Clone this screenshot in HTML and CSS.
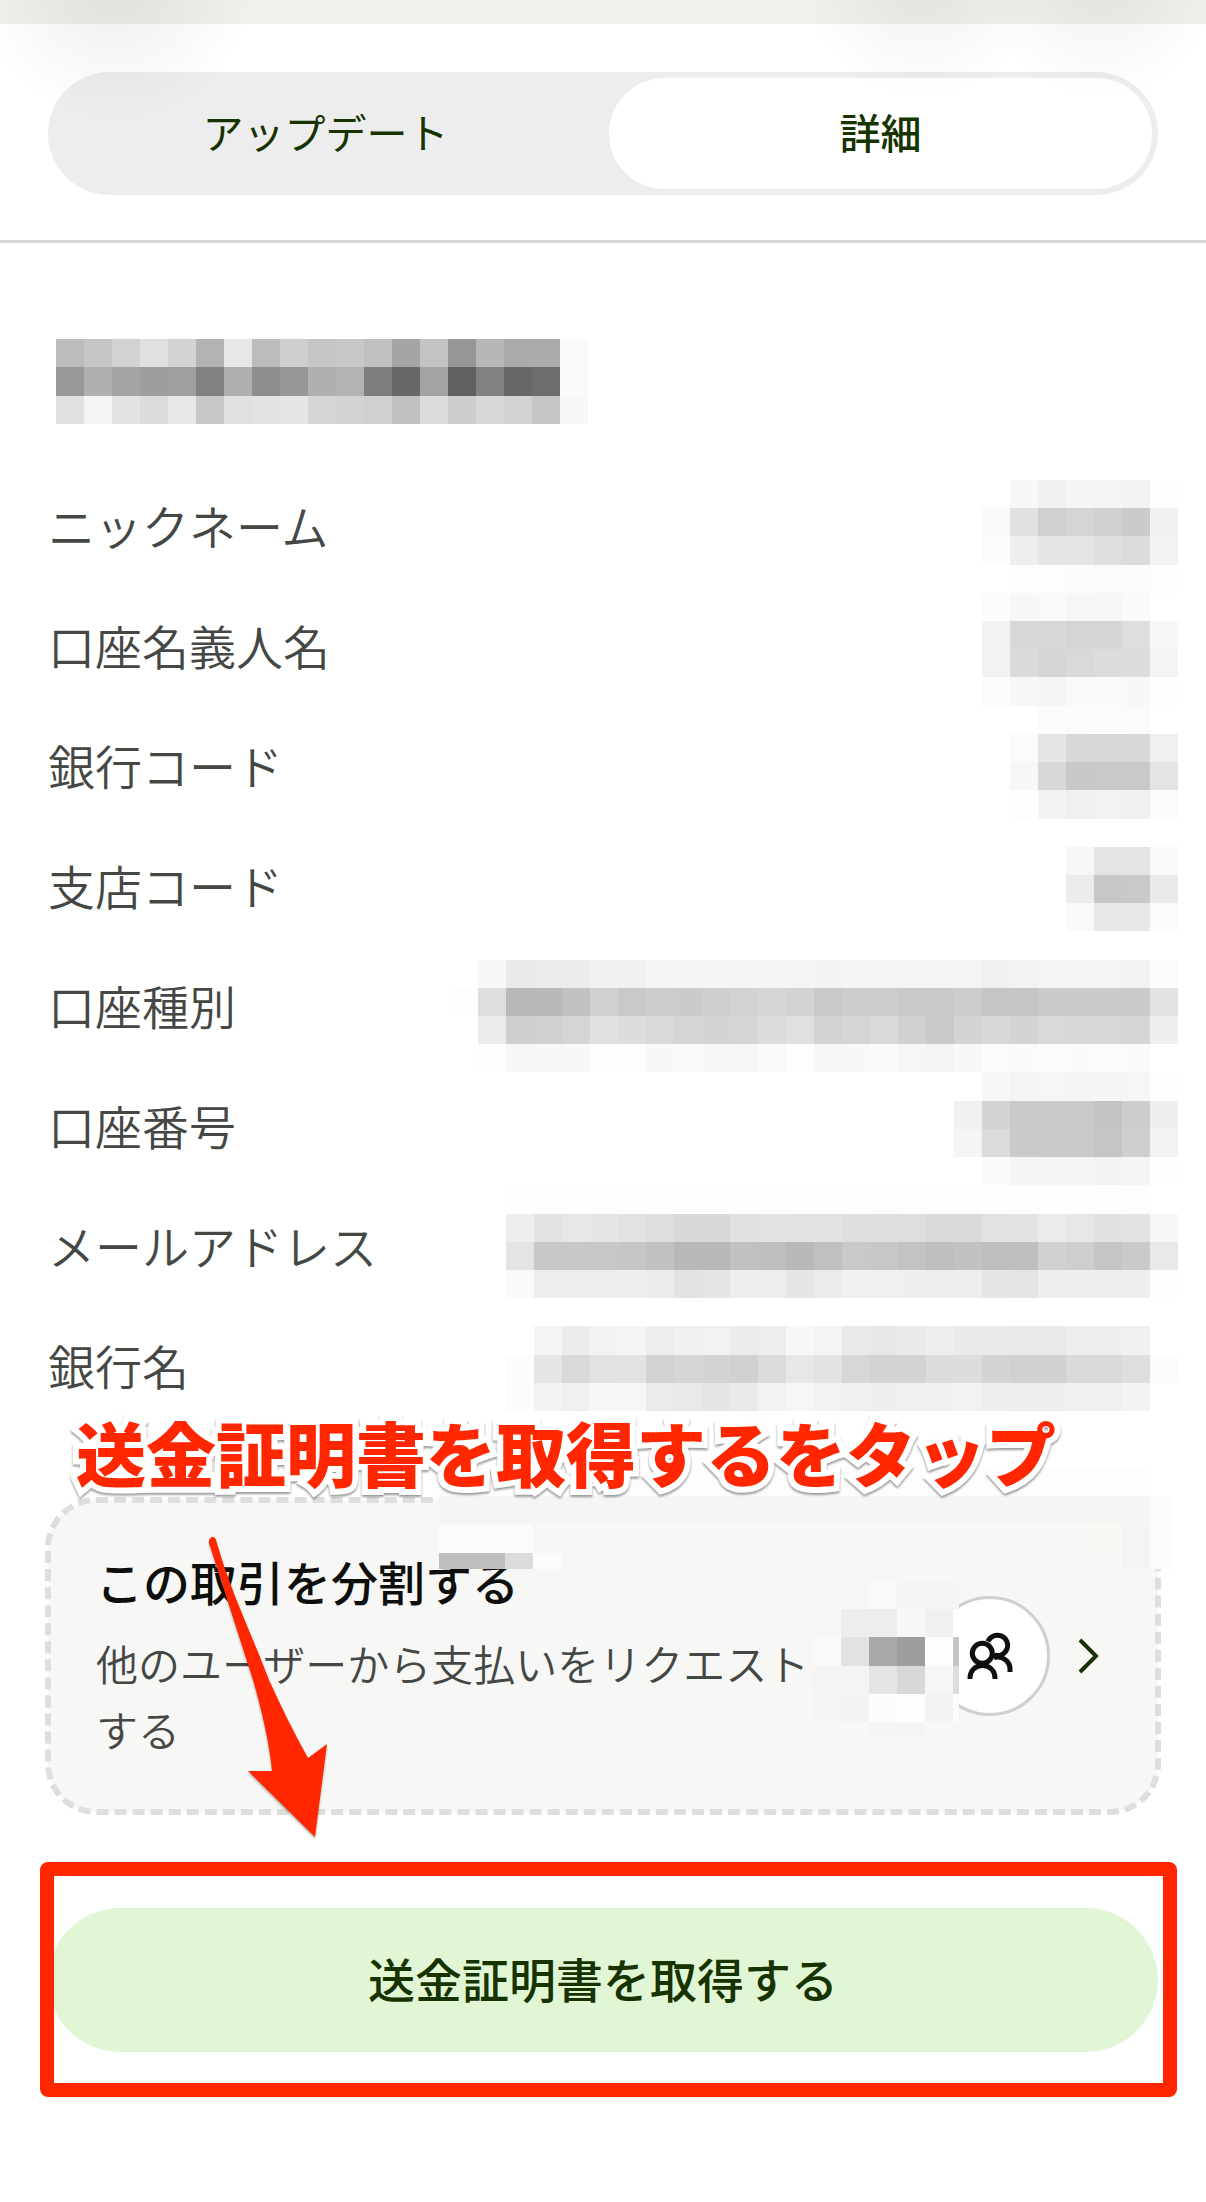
FILE: index.html
```html
<!DOCTYPE html>
<html lang="ja">

<head>
    <meta charset="UTF-8">
    <meta name="viewport" content="width=device-width, initial-scale=1.0">
    <title>詳細</title>
    <link rel="stylesheet" href="styles.css">
</head>

<body>
    <header class="top-bar"></header>

    <nav class="tabs-wrap">
        <div class="tabs" role="tablist">
            <button class="tab" type="button" role="tab" aria-selected="false">アップデート</button>
            <button class="tab active" type="button" role="tab" aria-selected="true">詳細</button>
        </div>
    </nav>

    <main class="content">
        <svg class="mosaic name-mosaic" id="name-mosaic" viewBox="0 0 19 3" preserveAspectRatio="none" aria-hidden="true"></svg>

        <section class="details">
            <table class="details-table">
                <tbody>
                    <tr><th scope="row">ニックネーム</th><td></td></tr>
                    <tr><th scope="row">口座名義人名</th><td></td></tr>
                    <tr><th scope="row">銀行コード</th><td></td></tr>
                    <tr><th scope="row">支店コード</th><td></td></tr>
                    <tr><th scope="row">口座種別</th><td></td></tr>
                    <tr><th scope="row">口座番号</th><td></td></tr>
                    <tr><th scope="row">メールアドレス</th><td></td></tr>
                    <tr><th scope="row">銀行名</th><td></td></tr>
                </tbody>
            </table>
            <svg class="mosaic details-mosaic" id="details-mosaic" viewBox="0 0 26 33" preserveAspectRatio="none" aria-hidden="true"></svg>
        </section>

        <section class="split">
            <a class="split-card" href="#">
                <span class="split-text">
                    <span class="split-title">この取引を分割する</span>
                    <span class="split-desc">他のユーザーから支払いをリクエストする</span>
                </span>
                <span class="avatars">
                    <span class="avatar">
                        <svg width="48" height="48" viewBox="0 0 48 48" fill="none" stroke="#0e0f0c" stroke-width="5">
                            <circle cx="16.3" cy="21.3" r="10" />
                            <path d="M4 47v-1c0-7 5-12.5 12.5-12.5S29 39 29 46v1" />
                            <path d="M22 9.5A10.2 10.2 0 1 1 28 23" />
                            <path d="M28 25.5c9-2 16 4 16 11.5v3" />
                        </svg>
                    </span>
                    <svg class="mosaic avatar-mosaic" id="avatar-mosaic" viewBox="0 0 5.2 5.5" preserveAspectRatio="none" aria-hidden="true"></svg>
                </span>
                <svg class="chevron" width="48" height="48" viewBox="0 0 48 48" fill="none" stroke="#163300" stroke-width="4">
                    <path d="M18 8l16 16-16 16" />
                </svg>
            </a>
            <svg class="mosaic card-mosaic" width="732" height="101" viewBox="0 0 732 101" aria-hidden="true">
                <rect width="711" height="28" fill="#fdfdfd" />
                <rect y="28" width="711" height="73" fill="#f7f7f5" />
                <rect y="28" width="711" height="28" fill="#f5f5f4" />
                <rect x="711" y="28" width="21" height="73" fill="#fbfbfa" />
                <rect y="57" width="94" height="28" fill="#fcfcfb" />
                <rect x="656" y="57" width="27" height="28" fill="#f8f8f4" />
                <rect x="683" y="57" width="28" height="44" fill="#f4f4f3" />
                <rect y="85" width="66" height="16" fill="#bfbfbf" />
                <rect x="66" y="85" width="28" height="16" fill="#dcdcdc" />
                <rect x="94" y="85" width="28" height="16" fill="#fcfcfb" />
            </svg>
            <p class="note">送金証明書を取得するをタップ</p>
            <svg class="arrow" width="140" height="320" viewBox="200 1530 140 320" aria-hidden="true">
                <path fill="#ff2600" d="M216 1540C230 1590 250 1630 269 1680Q288 1722 308 1758L327 1744 315 1837 248 1771H272C269 1740 262 1712 253 1680L209 1543C208 1536 215 1535 216 1540Z" />
            </svg>
        </section>

        <div class="action">
            <button class="receipt-btn" type="button">送金証明書を取得する</button>
            <span class="highlight"></span>
        </div>
    </main>

    <script>
        // Each entry: [row, first column, grey level of every cell]
        const nameCells = [
            [0, 0, 'bc c6 d2 e0 d3 b3 e7 bc cf c6 c8 c0 a5 c3 97 b7 ab ab fa'],
            [1, 0, '98 b0 a4 9e 9f 82 af 8e 96 b0 b3 7e 68 a3 60 82 68 6d fa'],
            [2, 0, 'e0 f4 e3 dc e8 c8 e0 e3 e6 d5 d2 d0 c1 dc cd d7 d3 c6 f8']
        ];

        const detailCells = [
            [0, 20, 'f8 f1 f5 f4 f2 fd'],
            [1, 19, 'fa e1 d0 d5 d1 cb f1'],
            [2, 19, 'fc ee e6 e4 df dc f3'],
            [3, 20, 'fd fd fc fb fb fd'],
            [4, 19, 'fc f7 f9 f6 f7 fa'],
            [5, 19, 'f2 d8 d8 d5 d6 de f8'],
            [6, 19, 'f2 da d6 d9 dc dc f4'],
            [7, 19, 'fc f7 f5 f9 fa f8 fe'],
            [8, 21, 'fc fb fb fb'],
            [9, 20, 'fb e5 d8 d7 d8 f0'],
            [10, 20, 'f7 d8 c8 c9 c9 e4'],
            [11, 20, 'fd f3 f0 f2 f1 fb'],
            [13, 22, 'f6 e4 e4 f9'],
            [14, 22, 'ec c7 c9 ea'],
            [15, 22, 'f9 e8 e8 fb'],
            [17, 1, 'f8 ea eb ec f0 f1 f4 f5 f5 f5 f5 f4 f3 f5 f4 f5 f5 f4 f0 f2 f4 f4 f4 f3 fc'],
            [18, 0, 'fd de b8 b9 c1 d0 c9 cd cb cf d2 d6 d3 c9 cc cc c9 c9 cd c5 c5 cb cb cb cb e3'],
            [19, 1, 'eb cf d0 d5 e1 dd d9 d5 d4 d5 dc e0 d2 d5 d9 d0 c9 d4 d7 d4 d9 d7 d7 d5 ef'],
            [20, 1, 'fd f8 f8 f8 fd fd f8 f9 f7 f7 fa fd f7 f8 fa f6 f4 f8 fb fa fc fa fc fa'],
            [21, 19, 'f8 f5 f6 f5 f5 f6 fe'],
            [22, 18, 'f0 d4 c9 cb c9 c3 cd ef'],
            [23, 18, 'f5 db cb ca c9 c5 cf f3'],
            [24, 19, 'fa f5 f5 f5 f3 f5 fe'],
            [25, 2, 'fd fd fe fe fe fe fd fe fe fe fe fe fe fd fe fd fd fe fe fe fe fe fd'],
            [26, 2, 'ee e3 e7 e6 e2 de d8 d8 e1 e3 e2 e2 df df de da da e2 e3 eb e7 e1 e3 f7'],
            [27, 2, 'e4 c8 c8 c8 c6 c1 b8 b8 c1 bf b9 c0 c9 c7 c3 bf c2 be be d1 ce c5 ca e9'],
            [28, 2, 'fa ee ee ee ee ec e3 e5 ee ed e6 eb f1 f0 ef ed ee e5 e4 ef ef ee ef fd'],
            [30, 3, 'f5 ec f3 f5 ed f1 f2 ec ee f8 f4 e9 e8 ea ee ea ea e9 e9 ee ee f0'],
            [31, 2, 'fc e5 d9 e2 e3 d3 d6 d4 d1 db e7 e3 d7 d3 d3 dd dd d4 d1 d1 da da de fc'],
            [32, 2, 'fc f3 f0 f7 f6 eb e9 e6 ea f2 f6 f2 f0 ef f0 f0 f2 ef ee ee f0 f0 f3']
        ];

        const avatarCells = [
            [0, 2, 'f9 f5 f5 f5'],
            [1, 1, 'ee ed f8 f0 ff'],
            [2, 0, 'fa e3 a9 9e fd c4'],
            [3, 0, 'f4 f4 e5 d8 f6 dd'],
            [4, 0, 'f5 f3 fc fd f3 fc'],
            [5, 2, 'f5 f5 f7 f7']
        ];

        // Function to fill an svg with grey cells
        function drawMosaic(id, cells) {
            document.getElementById(id).innerHTML = cells.map(([row, start, greys]) =>
                greys.split(' ').map((g, i) =>
                    `<rect x="${start + i}" y="${row}" width="1" height="1" fill="#${g}${g}${g}" />`
                ).join('')
            ).join('');
        }

        drawMosaic('name-mosaic', nameCells);
        drawMosaic('details-mosaic', detailCells);
        drawMosaic('avatar-mosaic', avatarCells);
    </script>
</body>

</html>
```
FILE: styles.css
```css
* {
    box-sizing: border-box;
}

body {
    margin: 0;
    background-color: #fff;
    color: #454745;
    font-family: "Noto Sans CJK JP", sans-serif;
    font-size: 47px;
}

button {
    border: none;
    padding: 0 0 6px;
    font-family: inherit;
    color: #163300;
    cursor: pointer;
}

/* Top bar with the soft shadows of the floating buttons */
.top-bar {
    position: relative;
    height: 24px;
    background-color: #f0f1ec;
}

.top-bar::after {
    content: "";
    position: absolute;
    top: 0;
    left: 0;
    right: 0;
    height: 140px;
    pointer-events: none;
    background:
        radial-gradient(circle 140px at 115px -20px, rgba(0, 0, 0, 0.07), transparent),
        radial-gradient(circle 120px at calc(100% - 283px) -20px, rgba(0, 0, 0, 0.06), transparent),
        radial-gradient(circle 120px at calc(100% - 106px) -20px, rgba(0, 0, 0, 0.06), transparent);
}

/* Tabs */
.tabs-wrap {
    padding: 48px 48px 45px;
    border-bottom: 3px solid #d6d7d3;
}

.tabs {
    display: flex;
    gap: 12px;
    padding: 6px;
    border-radius: 62px;
    background-color: #ededed;
}

.tab {
    flex: 1;
    height: 111px;
    border-radius: 56px;
    background: none;
    font-size: 41px;
}

.tab.active {
    background-color: #fff;
    font-weight: 500;
}

.content {
    padding: 96px 48px 140px;
}

/* Blurred out values */
.mosaic {
    display: block;
    shape-rendering: crispEdges;
}

.name-mosaic {
    width: 532px;
    height: 85px;
    margin: 0 8px 44px;
}

.details {
    position: relative;
}

.details-mosaic {
    position: absolute;
    top: 12px;
    right: -20px;
    width: 728px;
    height: 931px;
}

.details-table {
    width: 100%;
    border-collapse: collapse;
}

.details-table th {
    height: 120px;
    padding: 0 0 6px;
    font-weight: 350;
    text-align: left;
    line-height: 72px;
}

/* Split card */
.split {
    position: relative;
    margin-top: 72px;
}

.split-card {
    position: relative;
    display: flex;
    align-items: center;
    padding: 48px;
    border-radius: 48px;
    background-color: #f7f7f5;
    color: inherit;
    text-decoration: none;
}

.split-card::before {
    content: "";
    position: absolute;
    inset: -3px;
    border: 6px dashed #dededd;
    border-radius: 51px;
}

.split-text {
    display: flex;
    flex: 1;
    flex-direction: column;
    gap: 16px;
    margin-right: 24px;
    padding-bottom: 2px;
}

.split-title {
    color: #0e0f0c;
    font-weight: 500;
    line-height: 66px;
}

.split-desc {
    font-size: 42px;
    font-weight: 350;
    line-height: 66px;
}

.avatars {
    position: relative;
    display: flex;
    justify-content: flex-end;
    width: 180px;
    margin-right: 12px;
}

.avatar {
    display: flex;
    align-items: center;
    justify-content: center;
    width: 120px;
    height: 120px;
    border: 3px solid #cfcfcf;
    border-radius: 50%;
    background-color: #fff;
}

.avatar-mosaic {
    position: absolute;
    top: -15px;
    right: 91px;
    width: 146px;
    height: 155px;
}

.card-mosaic {
    position: absolute;
    top: -32px;
    right: -13px;
}

/* Red annotations */
.note {
    position: absolute;
    top: -83px;
    left: 28px;
    margin: 0;
    color: #ff2600;
    font-size: 70px;
    font-weight: 900;
    line-height: 70px;
    white-space: nowrap;
    -webkit-text-stroke: 12px #fff;
    paint-order: stroke fill;
    filter: drop-shadow(0 2px 1px rgba(0, 0, 0, 0.4));
}

.arrow {
    position: absolute;
    top: 30px;
    left: 152px;
    filter: drop-shadow(0 2px 1px rgba(0, 0, 0, 0.3));
}

.action {
    position: relative;
    margin-top: 96px;
}

.receipt-btn {
    display: block;
    width: 100%;
    height: 144px;
    border-radius: 72px;
    background-color: #e0f6d5;
    font-size: 47px;
    font-weight: 500;
}

.highlight {
    position: absolute;
    inset: -46px -19px -45px -8px;
    border: 14px solid #ff2600;
    border-radius: 8px;
    pointer-events: none;
}
```
